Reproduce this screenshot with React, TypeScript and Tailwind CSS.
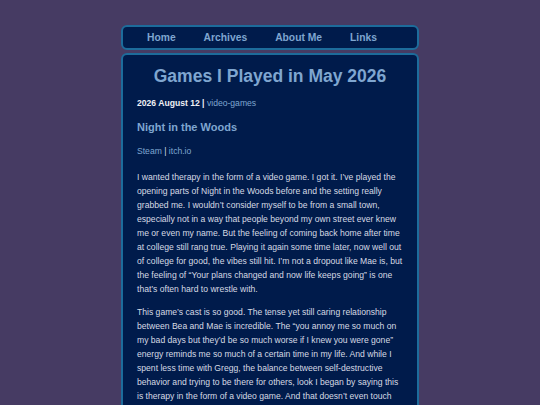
export default function App() {
  const font = { fontFamily: '"Liberation Sans", Arial, sans-serif' };
  return (
    <div className="min-h-screen bg-[#463b63] pt-[25px]" style={font}>
      <div className="mx-auto w-[298px]">
        <nav className="h-[25px] rounded-[6px] border-2 border-[#1d6c9b] bg-[#001b4b] flex items-center pl-[24px] gap-[28px] text-[10.3px] font-bold text-[#7fa6d0]">
          <a>Home</a>
          <a>Archives</a>
          <a>About Me</a>
          <a>Links</a>
        </nav>
        <main className="mt-[3px] rounded-t-[6px] border-2 border-b-0 border-[#1d6c9b] bg-[#001b4b] px-[14px] pt-[9px] pb-6 text-[8.6px] leading-[14px] text-[#d6dae4]">
          <h1 className="text-center text-[17.5px] leading-[24px] font-bold text-[#7fa6d0]">Games I Played in May 2026</h1>
          <p className="mt-[8px]">
            <span className="font-bold text-[#eef0f5]">2026 August 12 |</span>{' '}
            <a className="text-[#7fa6d0]">video-games</a>
          </p>
          <h2 className="mt-[10px] text-[11px] leading-[14px] font-bold text-[#7fa6d0]">Night in the Woods</h2>
          <p className="mt-[10px] text-[#7fa6d0]">
            <a>Steam</a> <span className="text-[#d6dae4]">|</span> <a>itch.io</a>
          </p>
          <p className="mt-[12px]">
            I wanted therapy in the form of a video game. I got it. I’ve played the opening parts of Night in the Woods before and the setting really grabbed me. I wouldn’t consider myself to be from a small town, especially not in a way that people beyond my own street ever knew me or even my name. But the feeling of coming back home after time at college still rang true. Playing it again some time later, now well out of college for good, the vibes still hit. I’m not a dropout like Mae is, but the feeling of “Your plans changed and now life keeps going” is one that’s often hard to wrestle with.
          </p>
          <p className="mt-[9px]">
            This game’s cast is so good. The tense yet still caring relationship between Bea and Mae is incredible. The “you annoy me so much on my bad days but they’d be so much worse if I knew you were gone” energy reminds me so much of a certain time in my life. And while I spent less time with Gregg, the balance between self-destructive behavior and trying to be there for others, look I began by saying this is therapy in the form of a video game. And that doesn’t even touch on Mae’s struggles with dissociation, which is a game full of moments that hit close to home.
          </p>
        </main>
      </div>
    </div>
  );
}
